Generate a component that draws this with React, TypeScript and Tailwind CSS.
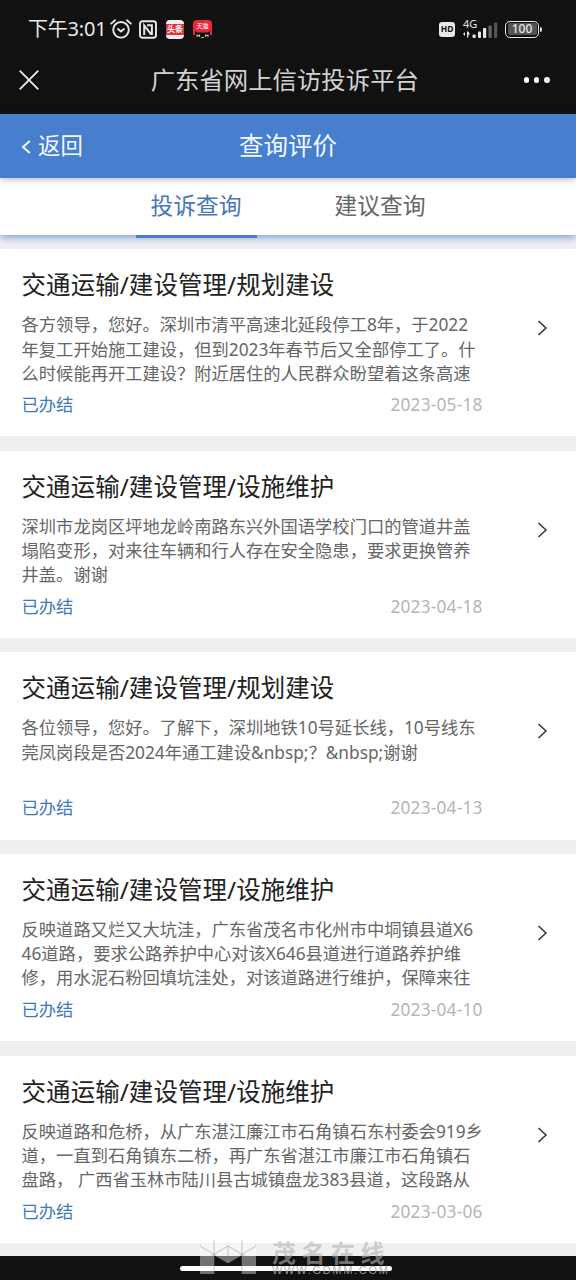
type Complaint = {
  title: string;
  lines: string[];
  date: string;
};

const complaints: Complaint[] = [
  {
    title: '交通运输/建设管理/规划建设',
    lines: [
      '各方领导，您好。深圳市清平高速北延段停工8年，于2022',
      '年复工开始施工建设，但到2023年春节后又全部停工了。什',
      '么时候能再开工建设？附近居住的人民群众盼望着这条高速'
    ],
    date: '2023-05-18'
  },
  {
    title: '交通运输/建设管理/设施维护',
    lines: [
      '深圳市龙岗区坪地龙岭南路东兴外国语学校门口的管道井盖',
      '塌陷变形，对来往车辆和行人存在安全隐患，要求更换管养',
      '井盖。谢谢'
    ],
    date: '2023-04-18'
  },
  {
    title: '交通运输/建设管理/规划建设',
    lines: [
      '各位领导，您好。了解下，深圳地铁10号延长线，10号线东',
      '莞凤岗段是否2024年通工建设&nbsp;？&nbsp;谢谢'
    ],
    date: '2023-04-13'
  },
  {
    title: '交通运输/建设管理/设施维护',
    lines: [
      '反映道路又烂又大坑洼，广东省茂名市化州市中垌镇县道X6',
      '46道路，要求公路养护中心对该X646县道进行道路养护维',
      '修，用水泥石粉回填坑洼处，对该道路进行维护，保障来往'
    ],
    date: '2023-04-10'
  },
  {
    title: '交通运输/建设管理/设施维护',
    lines: [
      '反映道路和危桥，从广东湛江廉江市石角镇石东村委会919乡',
      '道，一直到石角镇东二桥，再广东省湛江市廉江市石角镇石',
      '盘路， 广西省玉林市陆川县古城镇盘龙383县道，这段路从'
    ],
    date: '2023-03-06'
  }
];

function StatusBar() {
  return (
    <div className="flex h-[58px] items-center pr-[34px] pl-[28px] text-[#e8e8e8]">
      <span className="w-[78px] text-[20px] leading-none tracking-[-0.2px] whitespace-nowrap">
        下午3:01
      </span>
      <svg
        className="ml-[4px] h-[20px] w-[22px]"
        viewBox="0 0 22 20"
        fill="none"
        stroke="currentColor"
        strokeWidth="1.9"
        strokeLinecap="round"
      >
        <circle cx="11" cy="10.8" r="7.8" />
        <path d="M1.2 4.6 5 1.3M20.8 4.6 17 1.3M8 10l3 2.5 3-2.5" />
      </svg>
      <svg
        className="ml-[7px] h-[19px] w-[18px]"
        viewBox="0 0 18 19"
        fill="none"
        stroke="currentColor"
        strokeWidth="1.9"
      >
        <rect x="1" y="1.2" width="16" height="16.6" rx="2.5" />
        <path d="M5.2 15V5.4l6.6 8.4M8 5.2h4.9V14h-2.2" strokeWidth="2" />
      </svg>
      <div className="ml-[9px] flex h-[19px] w-[18px] items-center overflow-hidden rounded-[4px] bg-[#f5eeee]">
        <div className="flex h-[11px] w-full items-center justify-center bg-[#e2343d] text-[8px] leading-none font-bold text-white">
          头条
        </div>
      </div>
      <div className="relative ml-[9px] flex h-[19px] w-[19px] justify-center overflow-hidden rounded-[4px] bg-[#e9283a] pt-[3px] text-[6px] leading-none text-white">
        天猫
        <svg className="absolute bottom-0 left-0 h-[8px] w-[19px]" viewBox="0 0 19 8">
          <path d="M0 4h2V0l2.5 1.5h10L17 0v4h2v4H0z" fill="#111" />
          <path
            d="M4 5.8V4.3h2.5v1.5M12.5 5.8V4.3H15v1.5M8.3 6.5h2.4"
            fill="none"
            stroke="#ddd"
            strokeWidth="1.1"
          />
        </svg>
      </div>
      <div className="ml-auto flex h-[15px] w-[16px] items-center justify-center rounded-[3px] bg-[#e8e8e8] text-[8.5px] leading-none font-bold text-[#111]">
        HD
      </div>
      <div className="relative ml-[8px] h-[20px] w-[35px]">
        <span className="absolute top-0 left-0 font-['Noto_Sans'] text-[11px] leading-[9px]">4G</span>
        <svg className="h-[20px] w-[35px]" viewBox="0 0 35 20" fill="#e8e8e8">
          <path d="M0 15l2-2v4zM4 12.5v6h1.3v-3h1.8L5.3 12.5z" />
          <rect x="9.5" y="15.5" width="3.2" height="3.5" rx="1" />
          <rect x="15" y="12.5" width="3" height="6.5" rx="1" />
          <rect x="20" y="9" width="3.2" height="10" rx="1" />
          <rect x="25.5" y="6.5" width="3.2" height="12.5" rx="1" fill="#666" />
          <rect x="31" y="3.5" width="3.2" height="15.5" rx="1" fill="#555" />
        </svg>
      </div>
      <div className="ml-[7px] flex items-center">
        <div className="flex h-[17px] w-[34px] items-center justify-center rounded-[5px] border-[1.5px] border-[#e8e8e8] p-[1.5px]">
          <div className="flex h-full w-full items-center justify-center rounded-[2px] bg-[#555] font-['Noto_Sans'] text-[12px] leading-none font-medium">
            100
          </div>
        </div>
        <div className="ml-px h-[5px] w-[2px] rounded-r bg-[#e8e8e8]" />
      </div>
    </div>
  );
}

function TitleBar() {
  return (
    <div className="flex h-[56px] items-center justify-between pr-[26.5px] pb-[12px] pl-[19px]">
      <svg className="h-[20px] w-[20px]" viewBox="0 0 20 20" stroke="#e8e8e8" strokeWidth="1.9">
        <path d="M.7.7l18.6 18.6M19.3.7.7 19.3" />
      </svg>
      <h1 className="ml-[7px] text-[24.4px] leading-none text-[#d2d2d2]">广东省网上信访投诉平台</h1>
      <div className="flex gap-[5.2px]">
        <i className="h-[5.2px] w-[5.2px] rounded-full bg-white" />
        <i className="h-[5.2px] w-[5.2px] rounded-full bg-white" />
        <i className="h-[5.2px] w-[5.2px] rounded-full bg-white" />
      </div>
    </div>
  );
}

function Header() {
  return (
    <header className="relative z-20 grid h-[64px] grid-cols-3 items-center bg-[#477ecd] text-[#f2fbff] shadow-[0_1px_7px_rgba(0,0,0,0.3)]">
      <button className="flex items-center pl-[21px] text-[22.4px] leading-none">
        <svg
          className="mt-[2px] mr-[7px] h-[14px] w-[10px]"
          viewBox="0 0 10 14"
          fill="none"
          stroke="currentColor"
          strokeWidth="2"
        >
          <path d="M8.8 1 2 7l6.8 6" />
        </svg>
        返回
      </button>
      <h2 className="text-center text-[24.48px] leading-none">查询评价</h2>
    </header>
  );
}

function Tabs() {
  return (
    <div className="relative z-10 flex h-[57px] justify-center gap-[63px] bg-white text-[22.8px] shadow-[0_2px_8px_rgba(71,126,205,0.75)]">
      <button className="h-[60px] w-[121px] border-b-[3px] border-[#477ecd] text-[#4676be]">
        投诉查询
      </button>
      <button className="h-[60px] w-[121px] pb-[3px] text-[#666]">建议查询</button>
    </div>
  );
}

function ComplaintCard({ item }: { item: Complaint }) {
  return (
    <article className="flex h-[187.2px] justify-between bg-white pt-[18px] pr-[28px] pl-[21.6px]">
      <div className="w-[461px]">
        <h3 className="text-[24.48px] leading-[36px] tracking-[0.06px] whitespace-nowrap text-[#222]">
          {item.title}
        </h3>
        <div className="mt-[10px] h-[72.6px] text-[17.28px] leading-[24.2px] text-[#666]">
          {item.lines.map((line) => (
            <p key={line} className="whitespace-pre">
              {line}
            </p>
          ))}
        </div>
        <div className="mt-[7.4px] flex justify-between text-[17.28px] leading-[24.2px]">
          <span className="text-[#4078bd]">已办结</span>
          <time className="tracking-[0.2px] text-[#b5b5b5]">{item.date}</time>
        </div>
      </div>
      <svg
        className="mt-[53px] h-[16px] w-[11px]"
        viewBox="0 0 11 16"
        fill="none"
        stroke="#333"
        strokeWidth="1.5"
      >
        <path d="M1.5 1 9 8l-7.5 7" />
      </svg>
    </article>
  );
}

function Watermark() {
  return (
    <div className="absolute bottom-[5px] left-[200px] flex items-end gap-[16px]">
      <svg className="mb-px h-[36px] w-[56px]" viewBox="0 0 56 36">
        <path
          d="M0 8 14 0 28 8 42 0 56 8V36H42V17L28 25 14 17V36H0z"
          fill="#fff"
          fillOpacity="0.4"
        />
        <path
          d="M14 2v34M42 2v34M0 8l28 17L56 8M0 25 28 8l28 17M28 8v17"
          fill="none"
          stroke="#888"
          strokeOpacity="0.6"
          strokeWidth="0.8"
        />
      </svg>
      <div className="flex flex-col whitespace-nowrap">
        <span className="font-['Noto_Sans_CJK_SC',sans-serif] text-[24px] leading-[26px] font-bold tracking-[5.5px] text-[#b4b4b4]/60">
          茂名在线
        </span>
        <span className="font-['Liberation_Sans'] text-[11px] leading-[10px] tracking-[1.7px] text-[#a8a8a8]/90">
          WWW.GDMM.COM
        </span>
      </div>
    </div>
  );
}

export default function App() {
  return (
    <div className="relative flex h-[1280px] w-[576px] flex-col overflow-hidden bg-[#efeff0] font-['Noto_Sans','Noto_Sans_CJK_SC',sans-serif]">
      <div className="bg-[#111]">
        <StatusBar />
        <TitleBar />
      </div>
      <Header />
      <Tabs />
      <main className="mt-[14.3px] flex flex-1 flex-col gap-[14.4px]">
        {complaints.map((item) => (
          <ComplaintCard key={item.date} item={item} />
        ))}
      </main>
      <footer className="flex h-[24px] shrink-0 justify-center bg-[#111] pt-[10px] pr-[4px]">
        <div className="h-[5px] w-[212px] rounded-full bg-white" />
      </footer>
      <Watermark />
    </div>
  );
}
